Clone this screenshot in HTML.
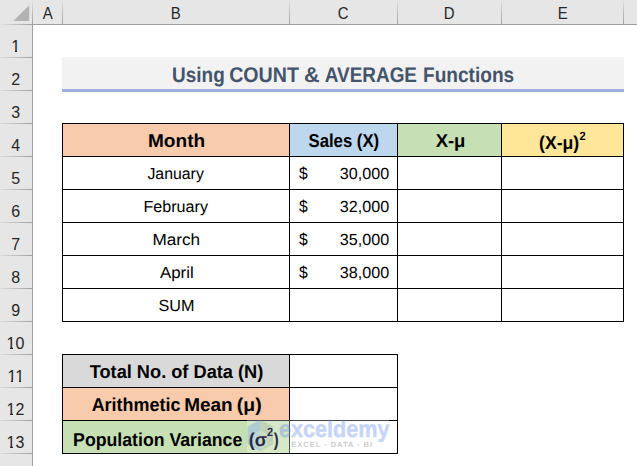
<!DOCTYPE html>
<html><head><meta charset="utf-8">
<style>
html,body{margin:0;padding:0;}
body{width:637px;height:466px;position:relative;overflow:hidden;background:#fff;font-family:"Liberation Sans",sans-serif;}
.a{position:absolute;}
.hd{background:#e6e6e6;}
.ln{background:#a0a0a0;}
.ch{position:absolute;top:0;height:24px;line-height:28px;text-align:center;font-size:17px;color:#262626;}
.ch span{display:inline-block;transform:scaleX(0.88);}
.rh span{display:inline-block;transform:scaleX(0.94);}
.rh{position:absolute;left:0;width:31px;height:33px;line-height:43px;text-align:center;font-size:17px;color:#262626;}
.bk{background:#000;}
.t{position:absolute;white-space:nowrap;transform-origin:0 0;line-height:normal;text-rendering:geometricPrecision;}
.b{font-weight:bold;}
</style></head><body>

<div class="a hd" style="left:0;top:0;width:637px;height:24px"></div>
<div class="a hd" style="left:0;top:0;width:32px;height:466px"></div>
<div class="a ln" style="left:32px;top:24px;width:605px;height:1px"></div>
<div class="a" style="left:0;top:24px;width:32px;height:1px;background:linear-gradient(to right,#e2e2e2,#a0a0a0)"></div>
<div class="a ln" style="left:32px;top:24px;width:1px;height:442px"></div>
<div class="a" style="left:32px;top:1px;width:1px;height:23px;background:linear-gradient(to bottom,#e0e0e0,#a0a0a0)"></div>
<div class="a" style="left:62px;top:1px;width:1px;height:23px;background:linear-gradient(to bottom,#dcdcdc,#a0a0a0)"></div>
<div class="a" style="left:289px;top:1px;width:1px;height:23px;background:linear-gradient(to bottom,#dcdcdc,#a0a0a0)"></div>
<div class="a" style="left:397px;top:1px;width:1px;height:23px;background:linear-gradient(to bottom,#dcdcdc,#a0a0a0)"></div>
<div class="a" style="left:501px;top:1px;width:1px;height:23px;background:linear-gradient(to bottom,#dcdcdc,#a0a0a0)"></div>
<div class="a" style="left:623px;top:1px;width:1px;height:23px;background:linear-gradient(to bottom,#dcdcdc,#a0a0a0)"></div>
<svg class="a" style="left:13px;top:5px" width="17" height="17"><path d="M16.2 0.2 L16.2 15.9 L0.4 15.9 Z" fill="#b2b2b2"/></svg>
<div class="ch" style="left:33px;width:29px"><span>A</span></div>
<div class="ch" style="left:63px;width:226px"><span>B</span></div>
<div class="ch" style="left:290px;width:107px"><span>C</span></div>
<div class="ch" style="left:398px;width:103px"><span>D</span></div>
<div class="ch" style="left:502px;width:121px"><span>E</span></div>
<div class="rh" style="top:25px"><span>1</span></div>
<div class="a hd" style="left:11px;top:50px;width:4px;height:2px"></div>
<div class="a hd" style="left:17px;top:50px;width:5px;height:2px"></div>
<div class="a" style="left:0;top:57px;width:32px;height:1px;background:linear-gradient(to right,#dcdcdc,#a0a0a0)"></div>
<div class="rh" style="top:58px"><span>2</span></div>
<div class="a" style="left:0;top:90px;width:32px;height:1px;background:linear-gradient(to right,#dcdcdc,#a0a0a0)"></div>
<div class="rh" style="top:91px"><span>3</span></div>
<div class="a" style="left:0;top:123px;width:32px;height:1px;background:linear-gradient(to right,#dcdcdc,#a0a0a0)"></div>
<div class="rh" style="top:124px"><span>4</span></div>
<div class="a" style="left:0;top:156px;width:32px;height:1px;background:linear-gradient(to right,#dcdcdc,#a0a0a0)"></div>
<div class="rh" style="top:157px"><span>5</span></div>
<div class="a" style="left:0;top:189px;width:32px;height:1px;background:linear-gradient(to right,#dcdcdc,#a0a0a0)"></div>
<div class="rh" style="top:190px"><span>6</span></div>
<div class="a" style="left:0;top:222px;width:32px;height:1px;background:linear-gradient(to right,#dcdcdc,#a0a0a0)"></div>
<div class="rh" style="top:223px"><span>7</span></div>
<div class="a" style="left:0;top:255px;width:32px;height:1px;background:linear-gradient(to right,#dcdcdc,#a0a0a0)"></div>
<div class="rh" style="top:256px"><span>8</span></div>
<div class="a" style="left:0;top:288px;width:32px;height:1px;background:linear-gradient(to right,#dcdcdc,#a0a0a0)"></div>
<div class="rh" style="top:289px"><span>9</span></div>
<div class="a" style="left:0;top:321px;width:32px;height:1px;background:linear-gradient(to right,#dcdcdc,#a0a0a0)"></div>
<div class="rh" style="top:322px"><span>10</span></div>
<div class="a hd" style="left:6px;top:347px;width:4px;height:2px"></div>
<div class="a hd" style="left:13px;top:347px;width:3px;height:2px"></div>
<div class="a" style="left:0;top:354px;width:32px;height:1px;background:linear-gradient(to right,#dcdcdc,#a0a0a0)"></div>
<div class="rh" style="top:355px"><span>11</span></div>
<div class="a hd" style="left:7px;top:380px;width:4px;height:2px"></div>
<div class="a hd" style="left:13px;top:380px;width:6px;height:2px"></div>
<div class="a hd" style="left:21px;top:380px;width:5px;height:2px"></div>
<div class="a" style="left:0;top:387px;width:32px;height:1px;background:linear-gradient(to right,#dcdcdc,#a0a0a0)"></div>
<div class="rh" style="top:388px"><span>12</span></div>
<div class="a hd" style="left:6px;top:413px;width:4px;height:2px"></div>
<div class="a hd" style="left:13px;top:413px;width:3px;height:2px"></div>
<div class="a" style="left:0;top:420px;width:32px;height:1px;background:linear-gradient(to right,#dcdcdc,#a0a0a0)"></div>
<div class="rh" style="top:421px"><span>13</span></div>
<div class="a hd" style="left:6px;top:446px;width:4px;height:2px"></div>
<div class="a hd" style="left:13px;top:446px;width:3px;height:2px"></div>
<div class="a" style="left:0;top:453px;width:32px;height:1px;background:linear-gradient(to right,#dcdcdc,#a0a0a0)"></div>
<div class="a" style="left:0;top:486px;width:32px;height:1px;background:linear-gradient(to right,#dcdcdc,#a0a0a0)"></div>
<div class="a" style="left:62px;top:57px;width:562px;height:32px;background:#f2f2f2"></div>
<div class="a" style="left:62px;top:89px;width:562px;height:3px;background:#9cb0de"></div>
<div class="a" style="left:63px;top:124px;width:226px;height:32px;background:#f8cbad"></div>
<div class="a" style="left:290px;top:124px;width:107px;height:32px;background:#bdd7ee"></div>
<div class="a" style="left:398px;top:124px;width:103px;height:32px;background:#c6e0b4"></div>
<div class="a" style="left:502px;top:124px;width:121px;height:32px;background:#ffe699"></div>
<div class="a bk" style="left:62px;top:123px;width:562px;height:1px"></div>
<div class="a bk" style="left:62px;top:156px;width:562px;height:1px"></div>
<div class="a bk" style="left:62px;top:189px;width:562px;height:1px"></div>
<div class="a bk" style="left:62px;top:222px;width:562px;height:1px"></div>
<div class="a bk" style="left:62px;top:255px;width:562px;height:1px"></div>
<div class="a bk" style="left:62px;top:288px;width:562px;height:1px"></div>
<div class="a bk" style="left:62px;top:321px;width:562px;height:1px"></div>
<div class="a bk" style="left:62px;top:123px;width:1px;height:199px"></div>
<div class="a bk" style="left:289px;top:123px;width:1px;height:199px"></div>
<div class="a bk" style="left:397px;top:123px;width:1px;height:199px"></div>
<div class="a bk" style="left:501px;top:123px;width:1px;height:199px"></div>
<div class="a bk" style="left:623px;top:123px;width:1px;height:199px"></div>
<div class="a" style="left:63px;top:355px;width:226px;height:32px;background:#d9d9d9"></div>
<div class="a" style="left:63px;top:388px;width:226px;height:32px;background:#f8cbad"></div>
<div class="a" style="left:63px;top:421px;width:226px;height:32px;background:#c6e0b4"></div>
<div class="a bk" style="left:62px;top:354px;width:336px;height:1px"></div>
<div class="a bk" style="left:62px;top:387px;width:336px;height:1px"></div>
<div class="a bk" style="left:62px;top:420px;width:336px;height:1px"></div>
<div class="a bk" style="left:62px;top:453px;width:336px;height:1px"></div>
<div class="a bk" style="left:62px;top:354px;width:1px;height:100px"></div>
<div class="a bk" style="left:289px;top:354px;width:1px;height:100px"></div>
<div class="a bk" style="left:397px;top:354px;width:1px;height:100px"></div>
<div class="a" style="left:247px;top:420px;width:142px;height:33px;background:rgba(255,255,255,0.27)"></div>
<svg class="a" style="left:246px;top:418px" width="30" height="36" viewBox="0 0 30 36"><path d="M14.3 1.8 L1.5 8.4 L1.5 26.3 L14.3 33 Z" fill="rgba(110,160,225,0.38)"/><path d="M14.3 1.8 L27 8.4 L27 26.3 L14.3 33 Z" fill="rgba(120,135,130,0.22)"/><path d="M14.3 12 L7 16 L7 27 L14.3 31 L21.5 27 L21.5 16 Z" fill="rgba(255,255,255,0.18)"/></svg>
<div class="t b" style="left:279.3px;top:417.2px;font-size:23.6px;color:rgb(100,140,230);-webkit-text-stroke:0.5px rgb(100,140,230);opacity:0.36;transform:scaleX(0.916)">exceldemy</div>
<div class="t b" style="left:291.3px;top:439.8px;font-size:7.6px;color:#000;opacity:0.21;letter-spacing:0.93px">EXCEL - DATA - BI</div>
<div class="t b" style="left:0;top:64px;font-size:21.2px;color:#44546a;transform:translateX(172.11px) scaleX(0.8936)">Using</div>
<div class="t b" style="left:0;top:64px;font-size:21.2px;color:#44546a;transform:translateX(229.15px) scaleX(0.9268)">COUNT</div>
<div class="t b" style="left:0;top:64px;font-size:21.2px;color:#44546a;transform:translateX(303.96px) scaleX(1.0199)">&amp;</div>
<div class="t b" style="left:0;top:64px;font-size:21.2px;color:#44546a;transform:translateX(324.75px) scaleX(0.8939)">AVERAGE</div>
<div class="t b" style="left:0;top:64px;font-size:21.2px;color:#44546a;transform:translateX(422.98px) scaleX(0.9011)">Functions</div>
<div class="t b" style="left:0;top:130px;font-size:18.7px;color:#000;transform:translateX(147.96px) scaleX(1.0206)">Month</div>
<div class="t b" style="left:0;top:130px;font-size:18.7px;color:#000;transform:translateX(308.48px) scaleX(0.8957)">Sales (X)</div>
<div class="t b" style="left:0;top:130px;font-size:18.7px;color:#000;transform:translateX(435.64px) scaleX(0.9880)">X-&mu;</div>
<div class="t b" style="left:0;top:132px;font-size:18.7px;color:#000;transform:translateX(539.12px) scaleX(0.9402)">(X-&mu;)</div>
<div class="t b" style="left:0;top:129px;font-size:12px;color:#000;transform:translateX(579.47px) scaleX(0.9277)">2</div>
<div class="t" style="left:0;top:165px;font-size:16.1px;color:#000;transform:translateX(147.41px) scaleX(0.9853)">January</div>
<div class="t" style="left:0;top:164px;font-size:17px;color:#000;transform:translateX(298.93px) scaleX(0.9193)">$</div>
<div class="t" style="left:0;top:165px;font-size:16.1px;color:#000;transform:translateX(339.77px) scaleX(1.0026)">30,000</div>
<div class="t" style="left:0;top:198px;font-size:16.1px;color:#000;transform:translateX(143.51px) scaleX(1.0006)">February</div>
<div class="t" style="left:0;top:197px;font-size:17px;color:#000;transform:translateX(298.93px) scaleX(0.9193)">$</div>
<div class="t" style="left:0;top:198px;font-size:16.1px;color:#000;transform:translateX(339.77px) scaleX(1.0026)">32,000</div>
<div class="t" style="left:0;top:231px;font-size:16.1px;color:#000;transform:translateX(152.43px) scaleX(1.0670)">March</div>
<div class="t" style="left:0;top:230px;font-size:17px;color:#000;transform:translateX(298.93px) scaleX(0.9193)">$</div>
<div class="t" style="left:0;top:231px;font-size:16.1px;color:#000;transform:translateX(339.77px) scaleX(1.0026)">35,000</div>
<div class="t" style="left:0;top:264px;font-size:16.1px;color:#000;transform:translateX(159.97px) scaleX(1.0485)">April</div>
<div class="t" style="left:0;top:263px;font-size:17px;color:#000;transform:translateX(298.93px) scaleX(0.9193)">$</div>
<div class="t" style="left:0;top:264px;font-size:16.1px;color:#000;transform:translateX(339.77px) scaleX(1.0026)">38,000</div>
<div class="t" style="left:0;top:297px;font-size:16.1px;color:#000;transform:translateX(158.40px) scaleX(1.0058)">SUM</div>
<div class="t b" style="left:0;top:361px;font-size:18.7px;color:#000;transform:translateX(89.68px) scaleX(0.9741)">Total No. of Data (N)</div>
<div class="t b" style="left:0;top:394px;font-size:18.7px;color:#000;transform:translateX(91.64px) scaleX(0.9605)">Arithmetic</div>
<div class="t b" style="left:0;top:394px;font-size:18.7px;color:#000;transform:translateX(184.24px) scaleX(1.0144)">Mean</div>
<div class="t b" style="left:0;top:394px;font-size:18.7px;color:#000;transform:translateX(236.80px) scaleX(1.0383)">(&mu;)</div>
<div class="t b" style="left:0;top:429px;font-size:18.7px;color:#000;transform:translateX(73.11px) scaleX(0.9468)">Population Variance</div>
<div class="t b" style="left:0;top:429px;font-size:18.7px;color:#2b2b44;transform:translateX(248.66px) scaleX(0.9678)">(&sigma;</div>
<div class="t b" style="left:0;top:425px;font-size:12px;color:#2b2b44;transform:translateX(266.88px) scaleX(0.9092)">2</div>
<div class="t b" style="left:0;top:429px;font-size:18.7px;color:#2b2b44;transform:translateX(273.74px) scaleX(0.7915)">)</div>
</body></html>
